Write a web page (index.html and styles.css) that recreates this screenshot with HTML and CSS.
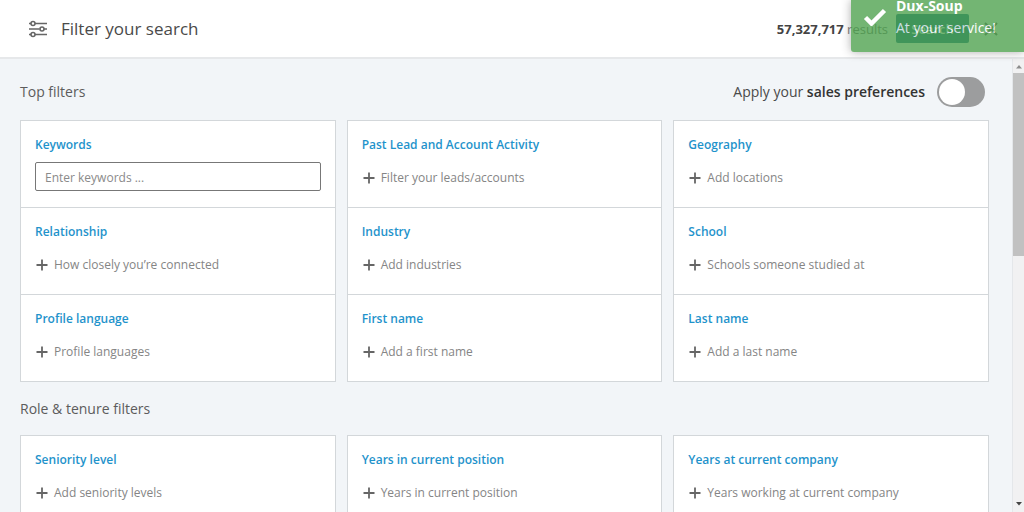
FILE: index.html
```html
<!DOCTYPE html>
<html lang="en">
<head>
<meta charset="utf-8">
<meta name="viewport" content="width=device-width, initial-scale=1">
<title>Filter your search</title>
<link rel="stylesheet" href="styles.css">
</head>
<body class="app">
<svg class="defs" aria-hidden="true">
  <symbol id="plus" viewBox="0 0 12 12"><path d="M6 0.5v11M0.5 6h11" stroke="currentColor" stroke-width="1.8"/></symbol>
</svg>
<header class="topbar">
  <svg class="topbar-icon" viewBox="0 0 20 18" aria-hidden="true" fill="none" stroke="currentColor" stroke-width="1.6">
    <path d="M1 3.5h2M7 3.5h12M1 9h10.500M16 9h3M1 14.500h2M7 14.500h12"/>
    <circle cx="5" cy="3.500" r="2"/><circle cx="14" cy="9" r="2"/><circle cx="5" cy="14.500" r="2"/>
  </svg>
  <h1 class="topbar-title">Filter your search</h1>
  <p class="count"><strong>57,327,717</strong> results</p>
  <button class="search" type="button">Search</button>
  <button class="close" type="button" aria-label="Close">
    <svg class="close-icon" viewBox="0 0 14 14" aria-hidden="true"><path d="M1 1l12 12M13 1L1 13" stroke="currentColor" stroke-width="2"/></svg>
  </button>
</header>
<div class="viewport">
  <main class="content">
    <div class="section-head">
      <h2 class="section-title">Top filters</h2>
      <label class="preferences">
        <span>Apply your <strong>sales preferences</strong></span>
        <input class="toggle" type="checkbox" role="switch">
      </label>
    </div>
    <div class="columns">
      <div class="column">
        <section class="filter">
          <label class="filter-name" for="keywords">Keywords</label>
          <input class="keywords" id="keywords" type="text" placeholder="Enter keywords ...">
        </section>
        <section class="filter">
          <h3 class="filter-name">Relationship</h3>
          <button class="add" type="button"><svg class="plus"><use href="#plus"/></svg>How closely you’re connected</button>
        </section>
        <section class="filter">
          <h3 class="filter-name">Profile language</h3>
          <button class="add" type="button"><svg class="plus"><use href="#plus"/></svg>Profile languages</button>
        </section>
      </div>
      <div class="column">
        <section class="filter">
          <h3 class="filter-name">Past Lead and Account Activity</h3>
          <button class="add" type="button"><svg class="plus"><use href="#plus"/></svg>Filter your leads/accounts</button>
        </section>
        <section class="filter">
          <h3 class="filter-name">Industry</h3>
          <button class="add" type="button"><svg class="plus"><use href="#plus"/></svg>Add industries</button>
        </section>
        <section class="filter">
          <h3 class="filter-name">First name</h3>
          <button class="add" type="button"><svg class="plus"><use href="#plus"/></svg>Add a first name</button>
        </section>
      </div>
      <div class="column">
        <section class="filter">
          <h3 class="filter-name">Geography</h3>
          <button class="add" type="button"><svg class="plus"><use href="#plus"/></svg>Add locations</button>
        </section>
        <section class="filter">
          <h3 class="filter-name">School</h3>
          <button class="add" type="button"><svg class="plus"><use href="#plus"/></svg>Schools someone studied at</button>
        </section>
        <section class="filter">
          <h3 class="filter-name">Last name</h3>
          <button class="add" type="button"><svg class="plus"><use href="#plus"/></svg>Add a last name</button>
        </section>
      </div>
    </div>
    <div class="section-head section-head-compact">
      <h2 class="section-title">Role &amp; tenure filters</h2>
    </div>
    <div class="columns">
      <div class="column">
        <section class="filter">
          <h3 class="filter-name">Seniority level</h3>
          <button class="add" type="button"><svg class="plus"><use href="#plus"/></svg>Add seniority levels</button>
        </section>
      </div>
      <div class="column">
        <section class="filter">
          <h3 class="filter-name">Years in current position</h3>
          <button class="add" type="button"><svg class="plus"><use href="#plus"/></svg>Years in current position</button>
        </section>
      </div>
      <div class="column">
        <section class="filter">
          <h3 class="filter-name">Years at current company</h3>
          <button class="add" type="button"><svg class="plus"><use href="#plus"/></svg>Years working at current company</button>
        </section>
      </div>
    </div>
  </main>
  <div class="scrollbar" aria-hidden="true">
    <svg class="arrow arrow-up" viewBox="0 0 12 14"><path d="M3 9.500L6 6l3 3.500z" fill="currentColor"/></svg>
    <div class="track"><div class="thumb"></div></div>
    <svg class="arrow" viewBox="0 0 12 14"><path d="M3 4L6 7.500L9 4z" fill="currentColor"/></svg>
  </div>
</div>
<aside class="toast" role="status">
  <svg class="toast-icon" viewBox="0 0 24 18" aria-hidden="true"><path d="M2.500 9.500l6 6L21.500 2.500" fill="none" stroke="currentColor" stroke-width="4.500"/></svg>
  <div class="toast-text">
    <strong>Dux-Soup</strong>
    <span>At your service!</span>
  </div>
</aside>
</body>
</html>
```
FILE: styles.css
```css
* { box-sizing: border-box; }

.app {
  margin: 0;
  height: 100vh;
  display: flex;
  flex-direction: column;
  overflow: hidden;
  position: relative;
  background: #f2f5f8;
  color: #4a4a4a;
  font: 14px/20px "Open Sans", "Noto Sans", sans-serif;
}
.app button, .app input { font-family: inherit; }
.defs { position: absolute; width: 0; height: 0; }

.topbar {
  flex: none;
  display: flex;
  align-items: center;
  padding: 14px 26px 14px 28px;
  background: #fff;
  border-bottom: 2px solid #e6e8ea;
}
.topbar-icon { width: 20px; height: 18px; color: #666; }
.topbar-title {
  margin: 0 auto 0 13px;
  font-size: 17px;
  line-height: 29px;
  font-weight: 400;
}
.count { margin: 0 8px 0 0; font-size: 13px; color: #666; }
.count strong { font-weight: 700; color: #444; }
.search {
  width: 73px;
  height: 29px;
  padding: 0;
  border: 0;
  border-radius: 2px;
  background: #00607f;
  color: #fff;
  font-size: 13px;
  font-weight: 600;
}
.close { margin-left: 15px; padding: 0; border: 0; background: none; color: #555; }
.close-icon { display: block; width: 14px; height: 14px; }

.viewport { flex: 1; min-height: 0; display: flex; }
.content { flex: 1; min-width: 0; padding: 13px 23px 0 20px; overflow: hidden; }
.section-head {
  display: flex;
  align-items: center;
  justify-content: space-between;
  padding: 5px 4px 13px 0;
}
.section-head-compact { padding: 17px 0 16px; }
.section-title { margin: 0; font-size: 14px; font-weight: 400; color: #5c5c5c; }
.preferences { display: flex; align-items: center; gap: 12px; }
.preferences strong { font-weight: 600; color: #333; }
.toggle {
  appearance: none;
  width: 48px;
  height: 30px;
  margin: 0;
  padding: 2px;
  border-radius: 15px;
  background: #9c9d9e;
}
.toggle::before {
  content: "";
  display: block;
  width: 26px;
  height: 26px;
  border-radius: 50%;
  background: #fff;
}
.toggle:checked::before { margin-left: auto; }

.columns { display: grid; grid-template-columns: repeat(3, 1fr); gap: 11px; }
.column { border: 1px solid #d3d7da; background: #fff; }
.filter { padding: 15px 14px 16px; }
.filter + .filter { border-top: 1px solid #d3d7da; }
.filter-name {
  display: block;
  margin: 0;
  font-size: 12px;
  line-height: 18px;
  font-weight: 600;
  color: #1f93cb;
}
.keywords {
  display: block;
  width: 100%;
  height: 29px;
  margin-top: 8px;
  padding: 2px 9px 0;
  border: 1px solid #777;
  border-radius: 2px;
  font-size: 12px;
  color: #333;
}
.keywords::placeholder { color: #8a8a8a; }
.add {
  display: flex;
  align-items: center;
  gap: 6px;
  height: 29px;
  margin-top: 8px;
  padding: 2px 1px 0;
  border: 0;
  background: none;
  font-size: 12px;
  color: #858585;
}
.plus { width: 12px; height: 12px; color: #666; }

.scrollbar {
  width: 12px;
  display: flex;
  flex-direction: column;
  background: #f1f1f2;
  border-left: 1px solid #e4e7ea;
}
.arrow { display: block; width: 12px; height: 14px; color: #444; }
.arrow-up { color: #8c8c8c; }
.track { flex: 1; }
.thumb { height: 43%; background: #c1c1c1; }

.toast {
  position: absolute;
  top: 0;
  right: 0;
  width: 173px;
  height: 52px;
  display: flex;
  gap: 9px;
  padding: 0 12px;
  overflow: hidden;
  border-radius: 0 0 0 3px;
  background: #51a351;
  box-shadow: 0 0 10px #999;
  color: #fff;
  opacity: 0.8;
}
.toast-icon { width: 24px; height: 18px; margin-top: 8px; }
.toast-text {
  display: flex;
  flex-direction: column;
  justify-content: flex-end;
  padding-bottom: 13px;
  line-height: 22px;
  white-space: nowrap;
}
```
